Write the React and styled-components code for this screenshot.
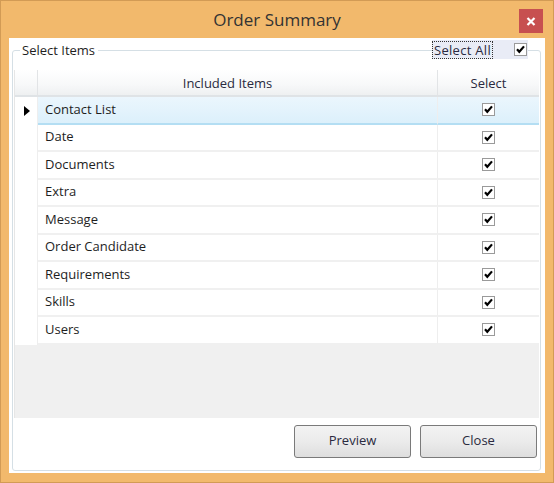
import React from 'react'
import styled, { createGlobalStyle } from 'styled-components'

const GlobalStyle = createGlobalStyle`
  html, body {
    margin: 0;
    padding: 0;
  }
  body {
    font-family: "Open Sans", "Noto Sans", sans-serif;
    font-size: 13px;
    color: #1e1e1e;
  }
`

const Frame = styled.div`
  width: 554px;
  height: 483px;
  box-sizing: border-box;
  background: #f2b96c;
  border: 1px solid #d29b55;
  padding: 0 8px 9px 8px;
  display: flex;
  flex-direction: column;
`

const TitleBar = styled.div`
  height: 37px;
  display: grid;
  grid-template-columns: 1fr auto 1fr;
  align-items: start;
`

const Title = styled.div`
  grid-column: 2;
  font-size: 17px;
  line-height: 24px;
  margin-top: 7px;
  color: #333;
`

const CloseBox = styled.div`
  grid-column: 3;
  justify-self: end;
  margin: 8px 2px 0 0;
  width: 24px;
  height: 24px;
  background: #c75050;
  display: flex;
  align-items: center;
  justify-content: center;
`

const Client = styled.div`
  flex: 1;
  background: #fff;
  padding: 4px 4px 2px 3px;
  display: flex;
  position: relative;
`

const Group = styled.fieldset`
  flex: 1;
  margin: 0;
  min-width: 0;
  border: 1px solid #d5dfe5;
  border-radius: 3px;
  padding: 11px 1px 12px 2px;
  display: flex;
  flex-direction: column;
`

const Legend = styled.legend`
  margin-left: 5px;
  padding: 0 3px 0 2px;
  line-height: 17px;
  color: #1e1e1e;
`

const SelectAll = styled.div`
  position: absolute;
  top: 2px;
  right: 17px;
  width: 96px;
  height: 19px;
  background: #e9ecf6;
  display: flex;
  align-items: center;
`

const FocusLabel = styled.span`
  border: 1px dotted #333;
  line-height: 16px;
  padding: 0 1px;
  letter-spacing: 0.3px;
  color: #2a2a40;
`

const SelectAllBox = styled.span`
  margin-left: auto;
  margin-right: 1px;
  display: flex;
`

const Grid = styled.div`
  height: 348px;
  display: flex;
  flex-direction: column;
  border-left: 1px solid #e6e6e6;
  margin-left: -1px;
`

const Row = styled.div`
  display: grid;
  grid-template-columns: 23px 400px 1fr;
  height: ${(p) => (p.header ? '27px' : '27.5px')};
  box-sizing: border-box;
`

const HeadCell = styled.div`
  background: linear-gradient(#ffffff, #f7f8f9 60%, #eef0f1);
  border-bottom: 2px solid #dfe3e6;
  border-right: ${(p) => (p.last ? 'none' : '1px solid #e2e4e6')};
  display: flex;
  align-items: center;
  justify-content: center;
  padding-right: ${(p) => p.offset || 0}px;
  color: #2a2a40;
  box-sizing: border-box;
`

const RowHead = styled.div`
  background: #fff;
  border-right: 1px solid #eeeeee;
  display: flex;
  align-items: center;
  justify-content: center;
  padding-left: 1px;
`

const Cell = styled.div`
  box-sizing: border-box;
  display: flex;
  align-items: center;
  justify-content: ${(p) => (p.center ? 'center' : 'flex-start')};
  padding-left: ${(p) => (p.center ? 0 : 7)}px;
  padding-bottom: ${(p) => (p.center ? 0 : 2)}px;
  border-right: ${(p) => (p.center ? 'none' : '1px solid #eeeeee')};
  background: ${(p) => (p.selected ? 'linear-gradient(#ebf6fd, #dcf0fb)' : '#fff')};
  border-bottom: 2px solid ${(p) => (p.selected ? '#b4def3' : '#f0f0f0')};
  color: #1e1e1e;
`

const Filler = styled.div`
  flex: 1;
  background: #f0f0f0;
`

const Buttons = styled.div`
  display: flex;
  justify-content: flex-end;
  gap: 9px;
  margin-top: 7px;
  padding-right: 2px;
`

const Button = styled.button`
  width: 117px;
  height: 33px;
  border: 1px solid #7a7a7a;
  border-radius: 3px;
  background: linear-gradient(#f3f3f3, #ebebeb 50%, #dedede);
  font-family: inherit;
  font-size: 13px;
  color: #2a2a40;
  padding: 0 0 3px 0;
`

const BoxFrame = styled.span`
  width: 13px;
  height: 13px;
  box-sizing: border-box;
  border: 1px solid #9a9a9a;
  background: #fff;
  display: inline-flex;
  align-items: center;
  justify-content: center;
`

const Check = () => (
  <BoxFrame>
    <svg width="11" height="11" viewBox="0 0 11 11">
      <path d="M2 5.2 L4.3 7.8 L9 2.4" fill="none" stroke="#000" strokeWidth="2.2" />
    </svg>
  </BoxFrame>
)

const items = [
  'Contact List',
  'Date',
  'Documents',
  'Extra',
  'Message',
  'Order Candidate',
  'Requirements',
  'Skills',
  'Users',
]

export default function App() {
  return (
    <>
      <GlobalStyle />
      <Frame>
        <TitleBar>
          <Title>Order Summary</Title>
          <CloseBox>
            <svg width="10" height="9" viewBox="0 0 10 9">
              <path d="M1.5 1 L8.5 8 M8.5 1 L1.5 8" stroke="#fff" strokeWidth="2.2" />
            </svg>
          </CloseBox>
        </TitleBar>
        <Client>
          <Group>
            <Legend>Select Items</Legend>
            <Grid>
              <Row header>
                <HeadCell />
                <HeadCell offset={20}>Included Items</HeadCell>
                <HeadCell last>Select</HeadCell>
              </Row>
              {items.map((item, i) => (
                <Row key={item}>
                  <RowHead>
                    {i === 0 && (
                      <svg width="6" height="10" viewBox="0 0 6 10">
                        <path d="M0 0 L6 5 L0 10 Z" fill="#000" />
                      </svg>
                    )}
                  </RowHead>
                  <Cell selected={i === 0}>{item}</Cell>
                  <Cell center selected={i === 0}>
                    <Check />
                  </Cell>
                </Row>
              ))}
              <Filler />
            </Grid>
            <Buttons>
              <Button>Preview</Button>
              <Button>Close</Button>
            </Buttons>
          </Group>
          <SelectAll>
            <FocusLabel>Select All</FocusLabel>
            <SelectAllBox>
              <Check />
            </SelectAllBox>
          </SelectAll>
        </Client>
      </Frame>
    </>
  )
}
